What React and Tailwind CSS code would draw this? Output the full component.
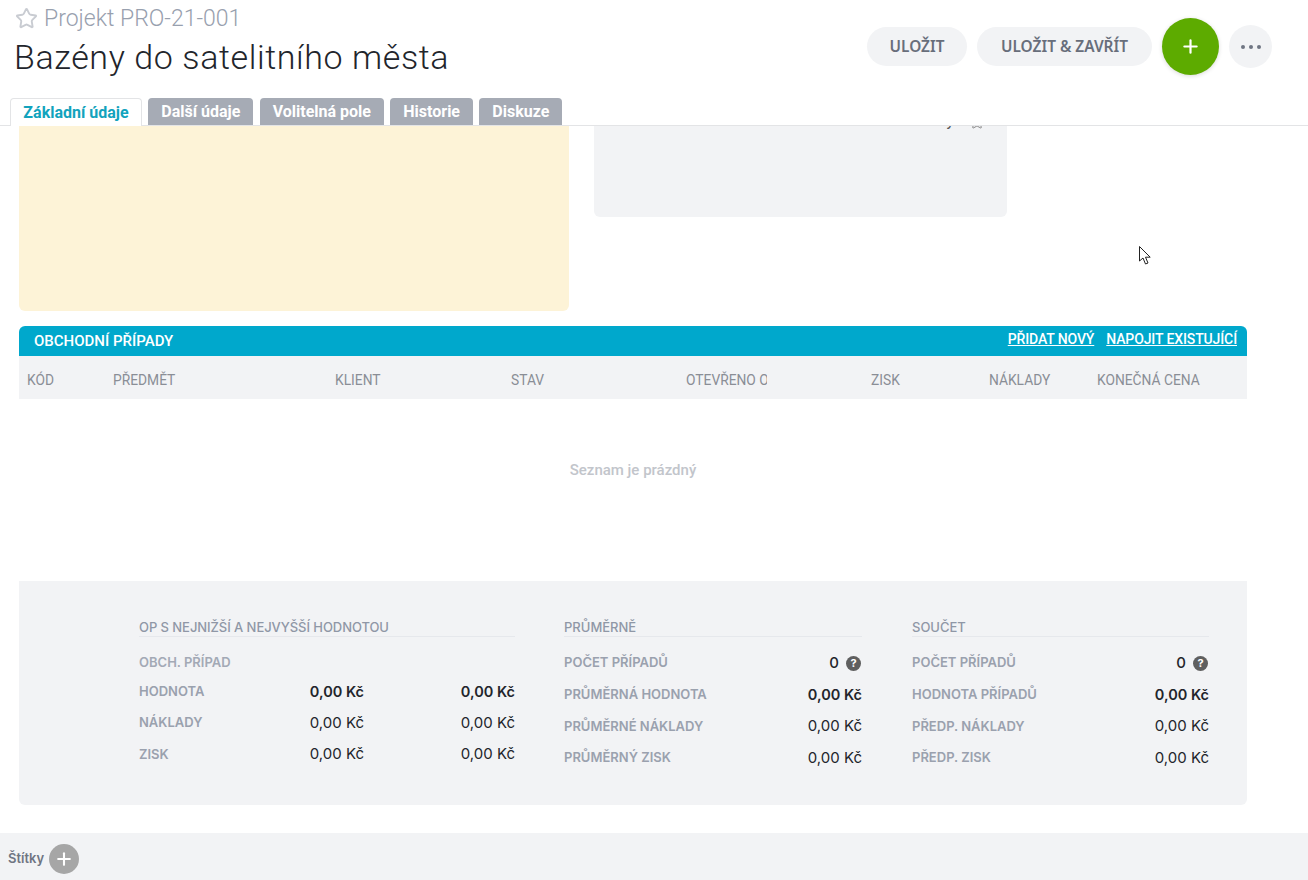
import { Star, Plus } from 'lucide-react'

const tabs = ['Další údaje', 'Volitelná pole', 'Historie', 'Diskuze']

const columns = [
  { label: 'KÓD', width: 'w-[86px]' },
  { label: 'PŘEDMĚT', width: 'w-[222px]' },
  { label: 'KLIENT', width: 'w-[176px]' },
  { label: 'STAV', width: 'w-[175px]' },
  { label: 'OTEVŘENO OD', width: 'w-[185px]', clip: true },
  { label: 'ZISK', width: 'w-[118px]' },
  { label: 'NÁKLADY', width: 'w-[108px]' },
  { label: 'KONEČNÁ CENA', width: 'flex-1' },
]

const rangeRows = [
  { label: 'HODNOTA', bold: true, height: 'h-[31px]' },
  { label: 'NÁKLADY', height: 'h-[32px]' },
  { label: 'ZISK', height: 'h-[31px]' },
]

const averages = [
  { label: 'PRŮMĚRNÁ HODNOTA', bold: true },
  { label: 'PRŮMĚRNÉ NÁKLADY' },
  { label: 'PRŮMĚRNÝ ZISK' },
]

const totals = [
  { label: 'HODNOTA PŘÍPADŮ', bold: true },
  { label: 'PŘEDP. NÁKLADY' },
  { label: 'PŘEDP. ZISK' },
]

function Help() {
  return (
    <span className="ml-[7px] mr-[1px] flex h-[15px] w-[15px] items-center justify-center rounded-full bg-[#5f5f5f] text-[11px] font-bold leading-none text-white">
      ?
    </span>
  )
}

function SummaryColumn({ title, width, label, rows }) {
  return (
    <div className={width}>
      <div className="h-[23px] border-b border-[#e6e8ec] pt-[4px] text-[13px] font-medium leading-[18px] text-[#8f97a6]">{title}</div>
      <div className="mt-[10px] flex h-[32px] items-center justify-between">
        <span className="text-[13px] font-semibold text-[#9aa1ae]">{label}</span>
        <span className="flex items-center text-[15px] font-medium text-[#22252b]">0<Help /></span>
      </div>
      {rows.map((row) => (
        <div key={row.label} className="flex h-[31.5px] items-center justify-between">
          <span className="text-[13px] font-semibold text-[#9aa1ae]">{row.label}</span>
          <span className={`text-[#22252b] ${row.bold ? 'text-[14.5px] font-semibold' : 'text-[15px] font-normal'}`}>0,00 Kč</span>
        </div>
      ))}
    </div>
  )
}

export default function App() {
  return (
    <div className="relative flex h-[880px] flex-col overflow-hidden bg-white font-['Roboto',sans-serif]">
      {/* Header */}
      <div className="flex h-[126px] shrink-0 justify-between border-b border-[#e3e4e6]">
        <div className="flex flex-col pl-[10px]">
          <div className="flex h-[38px] shrink-0 items-center pl-[5px] pb-[1px] text-[23px] font-light leading-none text-[#98a0ae]">
            <Star size={23} strokeWidth={2} className="mr-[6px] text-[#c9ccd2]" />
            Projekt PRO-21-001
          </div>
          <h1 className="-mt-[1px] h-[61px] shrink-0 pl-[4px] text-[34px] font-light leading-[40px] tracking-[0.6px] text-[#22252b]">
            Bazény do satelitního města
          </h1>
          <div className="flex shrink-0 gap-[6.3px]">
            <div className="z-10 flex h-[28px] w-[132px] items-center justify-center rounded-t border border-b-0 border-[#e3e4e6] bg-white text-[16px] font-bold text-[#12a3bd]">
              Základní údaje
            </div>
            {tabs.map((tab) => (
              <div key={tab} className="flex h-[27px] items-center rounded-t bg-[#a6abb5] px-[13px] text-[16px] font-bold text-white">
                {tab}
              </div>
            ))}
          </div>
        </div>
        <div className="flex items-start pr-[36px] pt-[18px] font-['Noto_Sans',sans-serif]">
          <button className="mt-[9px] h-[39px] w-[100px] rounded-full bg-[#f2f3f5] text-[15.4px] font-semibold text-[#686e7b]">ULOŽIT</button>
          <button className="ml-[10px] mt-[9px] h-[39px] w-[175px] rounded-full bg-[#f2f3f5] text-[15.4px] font-semibold text-[#686e7b]">ULOŽIT &amp; ZAVŘÍT</button>
          <button className="ml-[10px] flex h-[57px] w-[57px] items-center justify-center rounded-full bg-[#5dab00] text-white shadow-[0_1px_4px_rgba(0,0,0,0.15)]">
            <Plus size={21} strokeWidth={2.5} />
          </button>
          <button className="ml-[10px] mt-[7px] flex h-[43px] w-[43px] items-center justify-center gap-[4px] rounded-full bg-[#f2f3f5]">
            <span className="h-[4px] w-[4px] rounded-full bg-[#6f7582]" />
            <span className="h-[4px] w-[4px] rounded-full bg-[#6f7582]" />
            <span className="h-[4px] w-[4px] rounded-full bg-[#6f7582]" />
          </button>
        </div>
      </div>

      {/* Content */}
      <div className="flex-1 pl-[19px] pr-[61px]">
        <div className="flex items-start gap-[25px]">
          <div className="h-[185px] w-[550px] rounded-b-md bg-[#fdf3d7]" />
          <div className="flex h-[91px] w-[413px] justify-end overflow-hidden rounded-b-md bg-[#f2f3f5] pr-[22px]">
            <div className="-mt-[17px] flex h-[24px] items-start gap-[15px] text-[16px] text-[#555]">
              <span>y</span>
              <Star size={16} strokeWidth={1.5} className="mt-[5px] text-[#888]" />
            </div>
          </div>
        </div>

        <div className="mt-[15px] flex h-[30px] items-center justify-between rounded-t-md bg-[#00a8cc] pl-[15px] pr-[10px] text-white">
          <span className="text-[15px] font-medium">OBCHODNÍ PŘÍPADY</span>
          <div className="-mt-[3px] flex gap-[12px] text-[14px] font-medium tracking-[-0.12px] underline">
            <span>PŘIDAT NOVÝ</span>
            <span>NAPOJIT EXISTUJÍCÍ</span>
          </div>
        </div>
        <div className="flex h-[43px] items-center bg-[#f2f3f5] pl-[8px] pt-[6px] text-[13.8px] text-[#8a8e96]">
          {columns.map((col) => (
            <div key={col.label} className={`${col.width} shrink-0`}>
              {col.clip ? <div className="w-[81px] overflow-hidden whitespace-nowrap">{col.label}</div> : col.label}
            </div>
          ))}
        </div>

        <div className="flex h-[182px] justify-center pt-[61px] text-[15px] font-medium leading-[20px] text-[#c2c5cb]">
          Seznam je prázdný
        </div>

        {/* Summary */}
        <div className="flex h-[224px] rounded-b-md bg-[#f2f3f5] pl-[120px] pt-[33px] font-['Inter',sans-serif]">
          <div className="w-[376px]">
            <div className="h-[23px] border-b border-[#e6e8ec] pt-[4px] text-[13px] font-medium leading-[18px] tracking-[-0.06px] text-[#8f97a6]">
              OP S NEJNIŽŠÍ A NEJVYŠŠÍ HODNOTOU
            </div>
            <div className="flex h-[38px] items-center pt-[14px] text-[13px] font-semibold text-[#a3a9b5]">OBCH. PŘÍPAD</div>
            <div className="mt-[1px]">
              {rangeRows.map((row) => (
                <div key={row.label} className={`flex ${row.height} items-center`}>
                  <span className="w-[150px] text-[13px] font-semibold text-[#9aa1ae]">{row.label}</span>
                  <span className={`w-[75px] text-right text-[#22252b] ${row.bold ? 'text-[14.5px] font-semibold' : 'text-[15px] font-normal'}`}>0,00 Kč</span>
                  <span className={`flex-1 text-right text-[#22252b] ${row.bold ? 'text-[14.5px] font-semibold' : 'text-[15px] font-normal'}`}>0,00 Kč</span>
                </div>
              ))}
            </div>
          </div>
          <div className="ml-[49px]">
            <SummaryColumn title="PRŮMĚRNĚ" width="w-[298px]" label="POČET PŘÍPADŮ" rows={averages} />
          </div>
          <div className="ml-[50px]">
            <SummaryColumn title="SOUČET" width="w-[297px]" label="POČET PŘÍPADŮ" rows={totals} />
          </div>
        </div>
      </div>

      {/* Footer */}
      <div className="flex h-[47px] shrink-0 items-center bg-[#f2f3f5] pl-[8px] pt-[4px] font-['Inter',sans-serif]">
        <span className="text-[13px] font-semibold text-[#6f7582]">Štítky</span>
        <span className="ml-[5px] flex h-[30px] w-[30px] items-center justify-center rounded-full bg-[#a6a6a6] text-white">
          <Plus size={20} strokeWidth={2.5} />
        </span>
      </div>

      {/* Mouse cursor */}
      <svg className="absolute left-[1138px] top-[245px]" width="14" height="21" viewBox="0 0 14 21">
        <path d="M1.5 1.5 L1.5 16 L5 13 L7.5 19 L10 18 L7.5 12.2 L12.2 12.2 Z" fill="#fff" stroke="#222" strokeWidth="1" />
      </svg>
    </div>
  )
}
